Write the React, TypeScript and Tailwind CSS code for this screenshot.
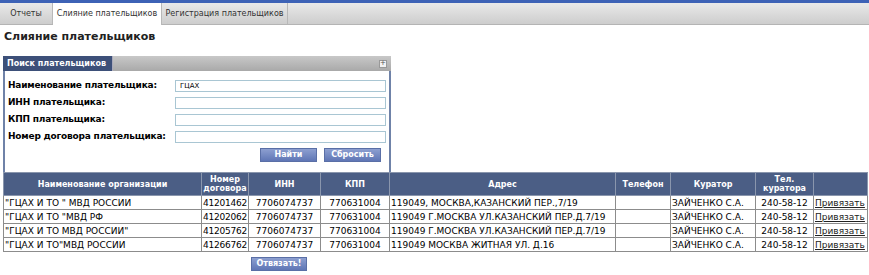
import React from "react";

const rows = [
  { name: '"ГЦАХ И ТО " МВД РОССИИ', num: "41201462", addr: "119049, МОСКВА,КАЗАНСКИЙ ПЕР.,7/19" },
  { name: '"ГЦАХ И ТО "МВД РФ', num: "41202062", addr: "119049 Г.МОСКВА УЛ.КАЗАНСКИЙ ПЕР.Д.7/19" },
  { name: '"ГЦАХ И ТО МВД РОССИИ"', num: "41205762", addr: "119049 Г.МОСКВА УЛ.КАЗАНСКИЙ ПЕР.Д.7/19" },
  { name: '"ГЦАХ И ТО"МВД РОССИИ', num: "41266762", addr: "119049 МОСКВА ЖИТНАЯ УЛ. Д.16" },
];

const fields = [
  { label: "Наименование плательщика:", value: "ГЦАХ" },
  { label: "ИНН плательщика:", value: "" },
  { label: "КПП плательщика:", value: "" },
  { label: "Номер договора плательщика:", value: "" },
];

function BlueButton({ children, w }: { children: React.ReactNode; w: string }) {
  return (
    <button
      className={`${w} h-[14px] border border-[#5a6fa6] bg-gradient-to-b from-[#8d9fd0] to-[#5f76b5] text-[8px] font-bold leading-[12px] text-white`}
    >
      {children}
    </button>
  );
}

export default function App() {
  return (
    <div className="w-[869px] h-[275px] bg-white overflow-hidden text-black" style={{ fontFamily: '"DejaVu Sans", Verdana, sans-serif' }}>
      {/* top bar + tabs */}
      <div className="h-[3px] bg-[#3d62b6]" />
      <div className="flex h-[22px] border-b border-[#b4b4b4] bg-gradient-to-b from-[#e9e9e9] to-[#cdcdcd] text-[8px] text-[#333] whitespace-nowrap">
        <div className="flex w-[53px] items-center justify-center border-r border-[#b8b8b8]">Отчеты</div>
        <div className="flex w-[109px] items-center justify-center border-r border-[#b8b8b8] bg-white -mb-px">Слияние плательщиков</div>
        <div className="flex w-[126px] items-center justify-center border-r border-[#b8b8b8]">Регистрация плательщиков</div>
      </div>

      <div className="px-[4px] pt-[5px] text-[11px] font-bold leading-[14px] text-[#222]">Слияние плательщиков</div>

      {/* search panel */}
      <div className="ml-[3px] mt-[12px] w-[388px]">
        <div className="flex h-[15px]">
          <div className="flex w-[110px] items-center border-r border-[#aab] bg-[#3d5079] pl-[4px] text-[8px] font-bold text-white whitespace-nowrap">
            Поиск плательщиков
          </div>
          <div className="flex flex-1 items-center justify-end bg-gradient-to-b from-[#c8c8c8] to-[#a9a9a9] pr-[4px]">
            <div className="flex h-[8px] w-[8px] items-center justify-center border border-[#999] bg-[#f2f2f2] text-[7px] leading-none text-[#555]">+</div>
          </div>
        </div>
        <div className="h-[101px] border-x-2 border-[#6f82a8] pl-[3px] pt-[9px]">
          <div className="flex flex-col gap-[5px]">
            {fields.map((f) => (
              <div key={f.label} className="flex h-[12px] items-center">
                <div className="w-[167px] text-[9px] font-bold whitespace-nowrap tracking-[-0.2px]">{f.label}</div>
                <div className="flex h-[12px] w-[211px] items-center border border-[#a9c6d3] bg-white pl-[4px] text-[7px]">{f.value}</div>
              </div>
            ))}
          </div>
          <div className="mt-[5px] flex justify-end gap-[7px] pr-[8px]">
            <BlueButton w="w-[57px]">Найти</BlueButton>
            <BlueButton w="w-[57px]">Сбросить</BlueButton>
          </div>
        </div>
      </div>

      {/* results table */}
      <table className="ml-[3px] w-[864px] table-fixed border-collapse text-[9px]">
        <colgroup>
          <col className="w-[198px]" />
          <col className="w-[47px]" />
          <col className="w-[72px]" />
          <col className="w-[69px]" />
          <col className="w-[226px]" />
          <col className="w-[55px]" />
          <col className="w-[85px]" />
          <col className="w-[58px]" />
          <col className="w-[54px]" />
        </colgroup>
        <thead>
          <tr className="h-[23px] bg-[#4b5e85] text-[8px] font-bold leading-[9px] text-white">
            <th className="border border-[#8a96ad] whitespace-nowrap">Наименование организации</th>
            <th className="border border-[#8a96ad]">Номер<br />договора</th>
            <th className="border border-[#8a96ad]">ИНН</th>
            <th className="border border-[#8a96ad]">КПП</th>
            <th className="border border-[#8a96ad]">Адрес</th>
            <th className="border border-[#8a96ad]">Телефон</th>
            <th className="border border-[#8a96ad]">Куратор</th>
            <th className="border border-[#8a96ad]">Тел.<br />куратора</th>
            <th className="border border-[#8a96ad]"></th>
          </tr>
        </thead>
        <tbody>
          {rows.map((r) => (
            <tr key={r.num} className="h-[14px] leading-[12px]">
              <td className="border border-[#8c8c8c] px-px whitespace-nowrap overflow-hidden">{r.name}</td>
              <td className="border border-[#8c8c8c] px-0 text-center whitespace-nowrap overflow-hidden tracking-[-0.2px]">{r.num}</td>
              <td className="border border-[#8c8c8c] px-px text-center whitespace-nowrap">7706074737</td>
              <td className="border border-[#8c8c8c] px-px text-center whitespace-nowrap">770631004</td>
              <td className="border border-[#8c8c8c] px-px whitespace-nowrap overflow-hidden">{r.addr}</td>
              <td className="border border-[#8c8c8c] px-px"></td>
              <td className="border border-[#8c8c8c] px-px whitespace-nowrap">ЗАЙЧЕНКО С.А.</td>
              <td className="border border-[#8c8c8c] px-px text-center whitespace-nowrap">240-58-12</td>
              <td className="border border-[#8c8c8c] px-px whitespace-nowrap overflow-hidden">
                <a className="text-[#222] underline">Привязать</a>
              </td>
            </tr>
          ))}
        </tbody>
      </table>

      <div className="ml-[251px] mt-[5px] flex">
        <BlueButton w="w-[56px]">Отвязать!</BlueButton>
      </div>
    </div>
  );
}
